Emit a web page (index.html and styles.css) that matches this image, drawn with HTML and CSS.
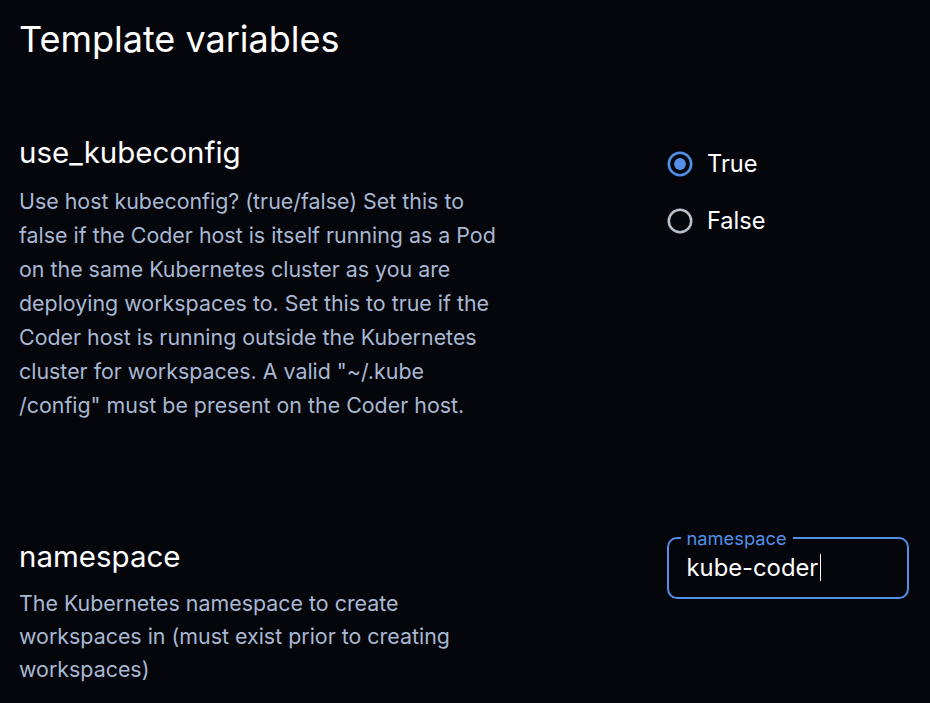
FILE: index.html
```html
<!DOCTYPE html>
<html>
<head>
<meta charset="utf-8">
<link rel="stylesheet" href="styles.css">
</head>
<body>
<div class="page">
  <h1 class="title">Template variables</h1>
  <div class="vars">
    <section class="var">
      <div class="info">
        <h2 class="name">use_kubeconfig</h2>
        <p class="desc">Use host kubeconfig? (true/false) Set this to false if the Coder host is itself running as a Pod on the same Kubernetes cluster as you are deploying workspaces to. Set this to true if the Coder host is running outside the Kubernetes cluster for workspaces. A valid "~/.kube /config" must be present on the Coder host.</p>
      </div>
      <div class="control">
        <div class="radios">
          <label class="radio">
            <svg class="radio-icon" width="26" height="26" viewBox="0 0 26 26"><circle cx="13" cy="13" r="11.2" fill="none" stroke="#5290e8" stroke-width="2.6"/><circle cx="13" cy="13" r="5.9" fill="#5290e8"/></svg>
            <span>True</span>
          </label>
          <label class="radio">
            <svg class="radio-icon" width="26" height="26" viewBox="0 0 26 26"><circle cx="13" cy="13" r="11.2" fill="none" stroke="#b8bfcb" stroke-width="2.6"/></svg>
            <span>False</span>
          </label>
        </div>
      </div>
    </section>
    <section class="var">
      <div class="info">
        <h2 class="name">namespace</h2>
        <p class="desc desc-short">The Kubernetes namespace to create workspaces in (must exist prior to creating workspaces)</p>
      </div>
      <div class="control">
        <fieldset class="field">
          <legend class="legend">namespace</legend>
          <div class="value">kube-coder<span class="caret"></span></div>
        </fieldset>
      </div>
    </section>
  </div>
</div>
</body>
</html>
```

FILE: styles.css
```css
html, body {
  margin: 0;
  padding: 0;
  background: #05060b;
}
body {
  font-family: Inter, "Noto Sans", sans-serif;
  color: #ffffff;
  height: 703px;
  overflow: hidden;
}
.page {
  padding: 15px 20px 0 19px;
}
.title {
  margin: 0;
  font-size: 36px;
  font-weight: 400;
  line-height: 48px;
}
.vars {
  display: flex;
  flex-direction: column;
  gap: 115.5px;
  margin-top: 71px;
}
.var {
  display: grid;
  grid-template-columns: 480px 1fr;
  column-gap: 168px;
}
.name {
  margin: 0;
  font-size: 29.5px;
  font-weight: 400;
  line-height: 36px;
}
.desc {
  margin: 14px 0 0;
  font-size: 21.4px;
  line-height: 34px;
  color: #a9b8d2;
}
.desc-short {
  margin-top: 13px;
  line-height: 33.3px;
}
.radios {
  display: flex;
  flex-direction: column;
  gap: 30.6px;
  padding-top: 17px;
}
.radio {
  display: flex;
  align-items: center;
  gap: 14px;
  font-size: 23.6px;
  line-height: 26px;
}
.radio-icon {
  display: block;
  flex: none;
}
.field {
  margin: -10px 0 0;
  padding: 6px 17.5px 15px;
  width: 242px;
  box-sizing: border-box;
  border: 2.6px solid #5290e8;
  border-radius: 10px;
}
.legend {
  padding: 0 6px;
  margin-left: -6px;
  font-size: 18.3px;
  line-height: 20px;
  color: #5290e8;
}
.value {
  font-size: 23.8px;
  line-height: 28px;
  display: flex;
  align-items: center;
}
.caret {
  display: inline-block;
  width: 1px;
  height: 27px;
  background: #ffffff;
  margin-left: 2px;
}
```
